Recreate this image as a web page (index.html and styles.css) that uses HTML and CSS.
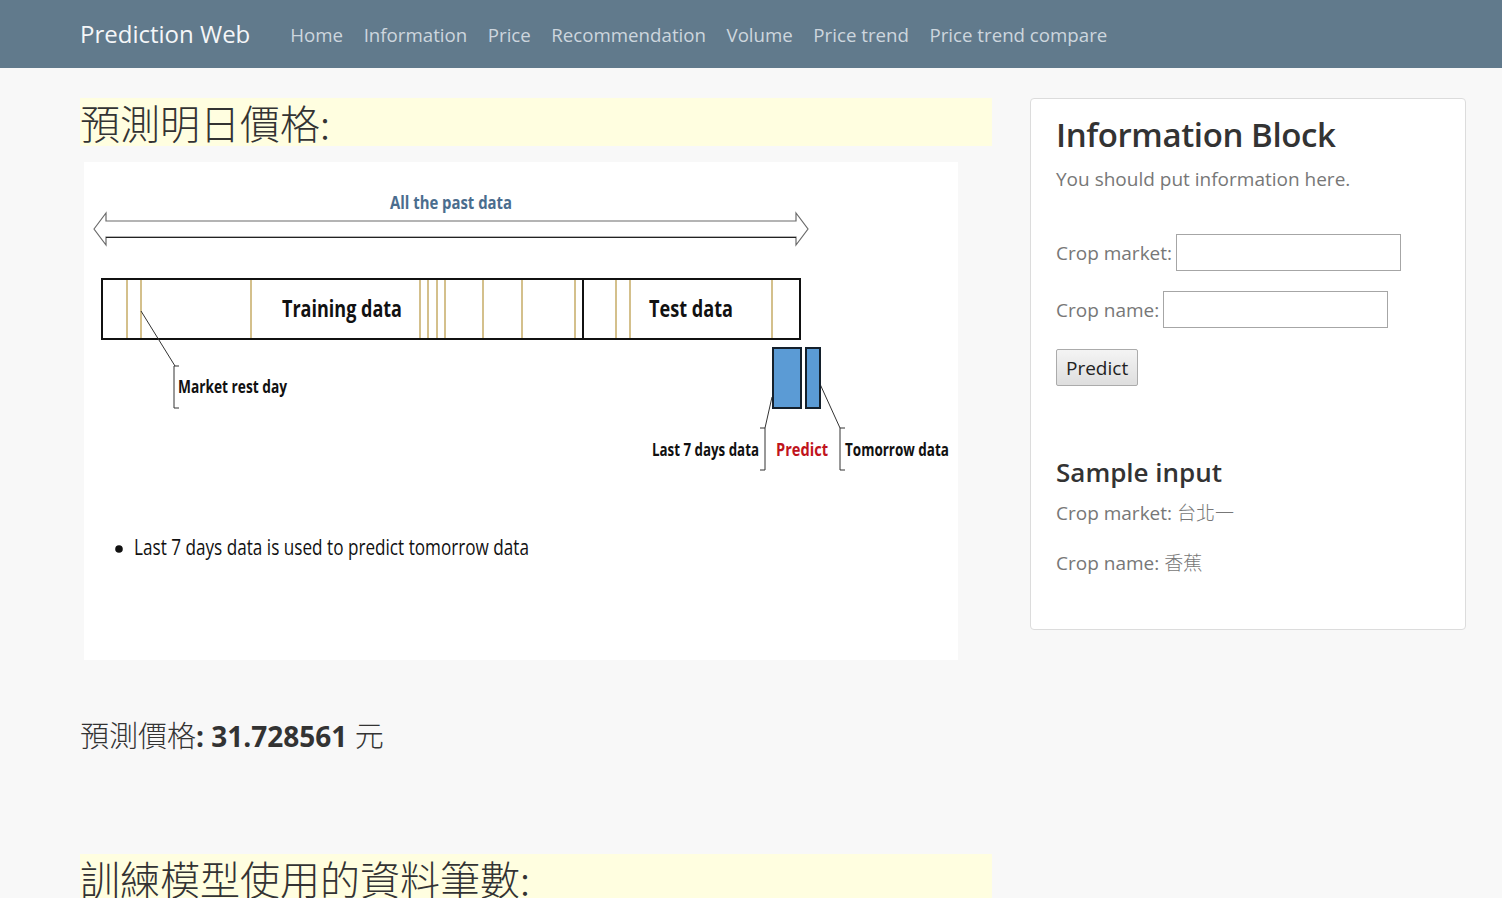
FILE: index.html
```html
<!DOCTYPE html>
<html lang="zh-Hant">
<head>
<meta charset="utf-8">
<title>Prediction Web</title>
<link rel="stylesheet" href="styles.css">
</head>
<body>
<nav class="navbar">
  <a class="brand" href="#">Prediction Web</a>
  <ul class="nav-links">
    <li><a href="#">Home</a></li>
    <li><a href="#">Information</a></li>
    <li><a href="#">Price</a></li>
    <li><a href="#">Recommendation</a></li>
    <li><a href="#">Volume</a></li>
    <li><a href="#">Price trend</a></li>
    <li><a href="#">Price trend compare</a></li>
  </ul>
</nav>
<main class="page">
  <section class="main-col">
    <h1 class="hl-title">預測明日價格:</h1>
    <div class="figure">
      <svg class="diagram" width="874" height="498" viewBox="84 162 874 498" xmlns="http://www.w3.org/2000/svg">
        <rect x="84" y="162" width="874" height="498" fill="#ffffff"/>
        <text x="451" y="209" text-anchor="middle" class="d-blue" textLength="122" lengthAdjust="spacingAndGlyphs">All the past data</text>
        <polygon points="94,229 106,213 106,221 796,221 796,213 808,229 796,245 796,237 106,237 106,245" fill="#ffffff" stroke="#6b6b6b" stroke-width="1.2"/>
        <line x1="106" y1="237.5" x2="796" y2="237.5" stroke="#222" stroke-width="1.2"/>
        <rect x="102" y="279" width="698" height="60" fill="#ffffff" stroke="#111" stroke-width="2"/>
        <g stroke="#d4c08c" stroke-width="2">
          <line x1="127" y1="280" x2="127" y2="338"/>
          <line x1="141" y1="280" x2="141" y2="338"/>
          <line x1="251" y1="280" x2="251" y2="338"/>
          <line x1="420" y1="280" x2="420" y2="338"/>
          <line x1="428" y1="280" x2="428" y2="338"/>
          <line x1="437" y1="280" x2="437" y2="338"/>
          <line x1="445" y1="280" x2="445" y2="338"/>
          <line x1="483" y1="280" x2="483" y2="338"/>
          <line x1="522" y1="280" x2="522" y2="338"/>
          <line x1="575" y1="280" x2="575" y2="338"/>
          <line x1="616" y1="280" x2="616" y2="338"/>
          <line x1="630" y1="280" x2="630" y2="338"/>
          <line x1="772" y1="280" x2="772" y2="338"/>
        </g>
        <line x1="583" y1="279" x2="583" y2="339" stroke="#111" stroke-width="2"/>
        <text x="342" y="317" text-anchor="middle" class="d-big" textLength="120" lengthAdjust="spacingAndGlyphs">Training data</text>
        <text x="691" y="317" text-anchor="middle" class="d-big" textLength="84" lengthAdjust="spacingAndGlyphs">Test data</text>
        <g stroke="#333" stroke-width="1" fill="none">
          <line x1="141" y1="311" x2="175" y2="366"/>
          <polyline points="179,366 174,366 174,408 179,408"/>
          <line x1="772" y1="397" x2="765" y2="428"/>
          <polyline points="760,428 765,428 765,470 760,470"/>
          <line x1="820" y1="384" x2="840" y2="428"/>
          <polyline points="845,428 840,428 840,470 845,470"/>
        </g>
        <text x="178" y="393" class="d-mid" textLength="109" lengthAdjust="spacingAndGlyphs">Market rest day</text>
        <rect x="773" y="348" width="28" height="60" fill="#5b9bd5" stroke="#14202c" stroke-width="2"/>
        <rect x="806" y="348" width="14" height="60" fill="#5b9bd5" stroke="#14202c" stroke-width="2"/>
        <text x="652" y="456" class="d-mid" textLength="107" lengthAdjust="spacingAndGlyphs">Last 7 days data</text>
        <text x="776" y="456" class="d-mid d-red" textLength="52" lengthAdjust="spacingAndGlyphs">Predict</text>
        <text x="845" y="456" class="d-mid" textLength="104" lengthAdjust="spacingAndGlyphs">Tomorrow data</text>
        <circle cx="119" cy="549" r="3.8" fill="#111"/>
        <text x="134" y="555" class="d-body" textLength="395" lengthAdjust="spacingAndGlyphs">Last 7 days data is used to predict tomorrow data</text>
      </svg>
    </div>
    <p class="result"><span class="cjk">預測價格</span><b>: 31.728561</b> <span class="cjk">元</span></p>
    <h1 class="hl-title second">訓練模型使用的資料筆數:</h1>
  </section>
  <aside class="side-col">
    <div class="panel">
      <h2 class="panel-title">Information Block</h2>
      <p class="panel-sub">You should put information here.</p>
      <form class="predict-form">
        <label class="field">Crop market: <input type="text" class="inp"></label>
        <label class="field">Crop name: <input type="text" class="inp"></label>
        <button type="button" class="btn">Predict</button>
      </form>
      <h3 class="sample-title">Sample input</h3>
      <p class="sample-line">Crop market: <span class="cjk">台北一</span></p>
      <p class="sample-line">Crop name: <span class="cjk">香蕉</span></p>
    </div>
  </aside>
</main>
</body>
</html>
```
FILE: styles.css
```css
* { box-sizing: border-box; }
html, body { margin: 0; padding: 0; }
body {
  background: #f8f8f8;
  font-family: "Open Sans", "Noto Sans CJK TC", sans-serif;
  color: #333;
  overflow: hidden;
}
.navbar {
  height: 68px;
  background: #617a8c;
  display: flex;
  align-items: center;
  padding-left: 80px;
}
.brand {
  color: #f4f6f8;
  font-size: 24px;
  text-decoration: none;
  margin-right: 40px;
  line-height: 68px;
}
.nav-links {
  list-style: none;
  margin: 0;
  padding: 0;
  display: flex;
  gap: 20.5px;
}
.nav-links a {
  color: #cdd6de;
  text-decoration: none;
  font-size: 18.7px;
}
.page {
  display: flex;
  gap: 38px;
  padding: 30px 0 0 80px;
}
.main-col { width: 912px; flex: none; }
.side-col { width: 436px; flex: none; }
.hl-title {
  margin: 0;
  background: #fffee0;
  font-family: "Noto Sans CJK TC", sans-serif;
  font-weight: 300;
  font-size: 40px;
  line-height: 48px;
  height: 48px;
  color: #333;
}
.hl-title.second { margin-top: 100px; }
.figure {
  margin: 16px 0 0 4px;
  width: 874px;
  height: 498px;
}
.diagram { display: block; }
.d-blue { font-family: "Open Sans", sans-serif; font-weight: 700; font-size: 18px; fill: #4b6d8e; }
.d-big { font-family: "Open Sans", sans-serif; font-weight: 700; font-size: 23px; fill: #111; }
.d-mid { font-family: "Open Sans", sans-serif; font-weight: 700; font-size: 17px; fill: #111; }
.d-red { fill: #c0141c; }
.d-body { font-family: "Open Sans", sans-serif; font-size: 21px; fill: #111; }
.result {
  margin: 56px 0 0 0;
  font-size: 28px;
  line-height: 36px;
  color: #333;
}
.cjk {
  font-family: "Noto Sans CJK TC", sans-serif;
  font-weight: 300;
}
.result .cjk { font-size: 29px; }
.result b { font-weight: 700; }
.panel {
  background: #fff;
  border: 1px solid #dcdcdc;
  border-radius: 4px;
  padding: 12px 25px 40px;
  height: 532px;
}
.panel-title {
  margin: 0;
  font-size: 33px;
  font-weight: 600;
  letter-spacing: -0.4px;
  line-height: 48px;
  color: #333;
}
.panel-sub {
  margin: 6px 0 0;
  font-size: 19px;
  color: #777;
  line-height: 28px;
}
.predict-form {
  margin-top: 41px;
  display: flex;
  flex-direction: column;
  align-items: flex-start;
  gap: 20px;
}
.field {
  font-size: 19px;
  color: #777;
  display: flex;
  align-items: center;
  gap: 4px;
}
.inp {
  width: 225px;
  height: 37px;
  border: 1px solid #a6a6a6;
  background: #fff;
}
.btn {
  font-family: "Open Sans", sans-serif;
  font-size: 19px;
  color: #222;
  padding: 0 9px;
  height: 37px;
  margin-top: 1px;
  border: 1px solid #ababab;
  border-radius: 2px;
  background: linear-gradient(#f4f4f4, #dedede);
}
.sample-title {
  margin: 69px 0 0;
  font-size: 26px;
  font-weight: 600;
  color: #333;
  line-height: 34px;
}
.sample-line {
  margin: 8px 0 0;
  font-size: 19px;
  color: #777;
  line-height: 30px;
}
.sample-line + .sample-line { margin-top: 19px; }
```
